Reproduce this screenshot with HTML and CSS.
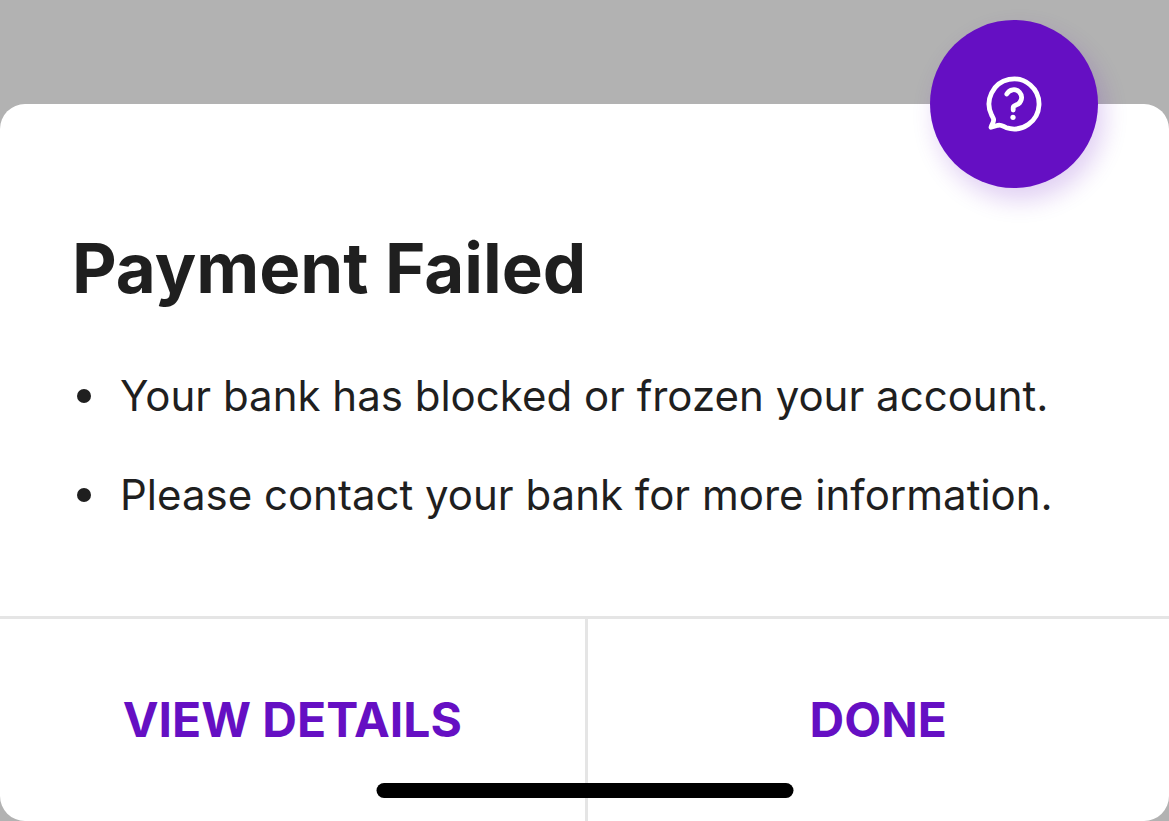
FILE: index.html
```html
<!DOCTYPE html>
<html lang="en">
<head>
    <meta charset="utf-8">
    <title>Payment Failed</title>
    <link rel="stylesheet" href="styles.css">
</head>
<body>
    <main class="sheet">
        <button class="help-button" type="button" aria-label="Help">
            <svg class="help-icon" viewBox="0 0 56 56" fill="none" stroke="#fff" stroke-width="4.800" stroke-linecap="round" stroke-linejoin="round">
                <path d="M5.600 39A25 25 0 1 1 20.500 51.800C17 50.500 15.500 48.500 12 49.300L5 51.300C5.500 48.500 8 46.500 7.600 43.500C7.400 42 6.200 40.500 5.600 39Z"/>
                <path d="M20.800 18A7.800 7.800 0 1 1 30.500 28.800C28.500 29.600 27.200 30 27.200 31.500V34"/>
                <circle cx="27" cy="41.300" r="2.600" fill="#fff" stroke="none"/>
            </svg>
        </button>
        <div class="content">
            <h1>Payment Failed</h1>
            <ul class="reasons">
                <li>Your bank has blocked or frozen your account.</li>
                <li>Please contact your bank for more information.</li>
            </ul>
        </div>
        <div class="actions">
            <button type="button">VIEW DETAILS</button>
            <button type="button">DONE</button>
        </div>
        <div class="home-indicator"></div>
    </main>
</body>
</html>
```
FILE: styles.css
```css
* { box-sizing: border-box; }
body {
    margin: 0;
    min-height: 100vh;
    padding-top: 104px;
    display: flex;
    background: #b2b2b2;
    color: #1f1f1f;
    font-family: Inter, sans-serif;
}
.sheet {
    position: relative;
    flex: 1;
    display: flex;
    flex-direction: column;
    background: #fff;
    border-radius: 25px;
}
.help-button {
    position: absolute;
    top: -84px;
    right: 71px;
    width: 168px;
    height: 168px;
    padding: 0;
    display: flex;
    align-items: center;
    justify-content: center;
    border: none;
    border-radius: 50%;
    background: #650fc3;
    box-shadow: 6px 12px 24px rgba(101, 15, 195, 0.2);
    cursor: pointer;
}
.help-icon { width: 56px; height: 56px; }
.content {
    flex: 1;
    padding: 122px 72px 64px;
}
h1 {
    margin: 0;
    font-size: 69px;
    line-height: 84px;
    font-weight: 700;
}
.reasons {
    margin: 61px 0 0;
    padding: 0;
    list-style: none;
    font-size: 42px;
    line-height: 50px;
}
.reasons li {
    display: flex;
    align-items: center;
    gap: 29px;
}
.reasons li::before {
    content: "";
    flex: none;
    width: 14px;
    height: 14px;
    margin-left: 5px;
    border-radius: 50%;
    background: #1f1f1f;
}
.reasons li + li { margin-top: 49px; }
.actions {
    display: grid;
    grid-template-columns: 1fr 1fr;
    border-top: 3px solid #e5e5e5;
}
.actions button {
    height: 202px;
    padding: 0;
    border: none;
    background: none;
    color: #650fc3;
    font: 700 48px/58px Inter, sans-serif;
    cursor: pointer;
}
.actions button + button { border-left: 3px solid #e5e5e5; }
.home-indicator {
    position: absolute;
    left: 50%;
    bottom: 23px;
    width: 417px;
    height: 15px;
    transform: translateX(-50%);
    border-radius: 8px;
    background: #000;
}
```
